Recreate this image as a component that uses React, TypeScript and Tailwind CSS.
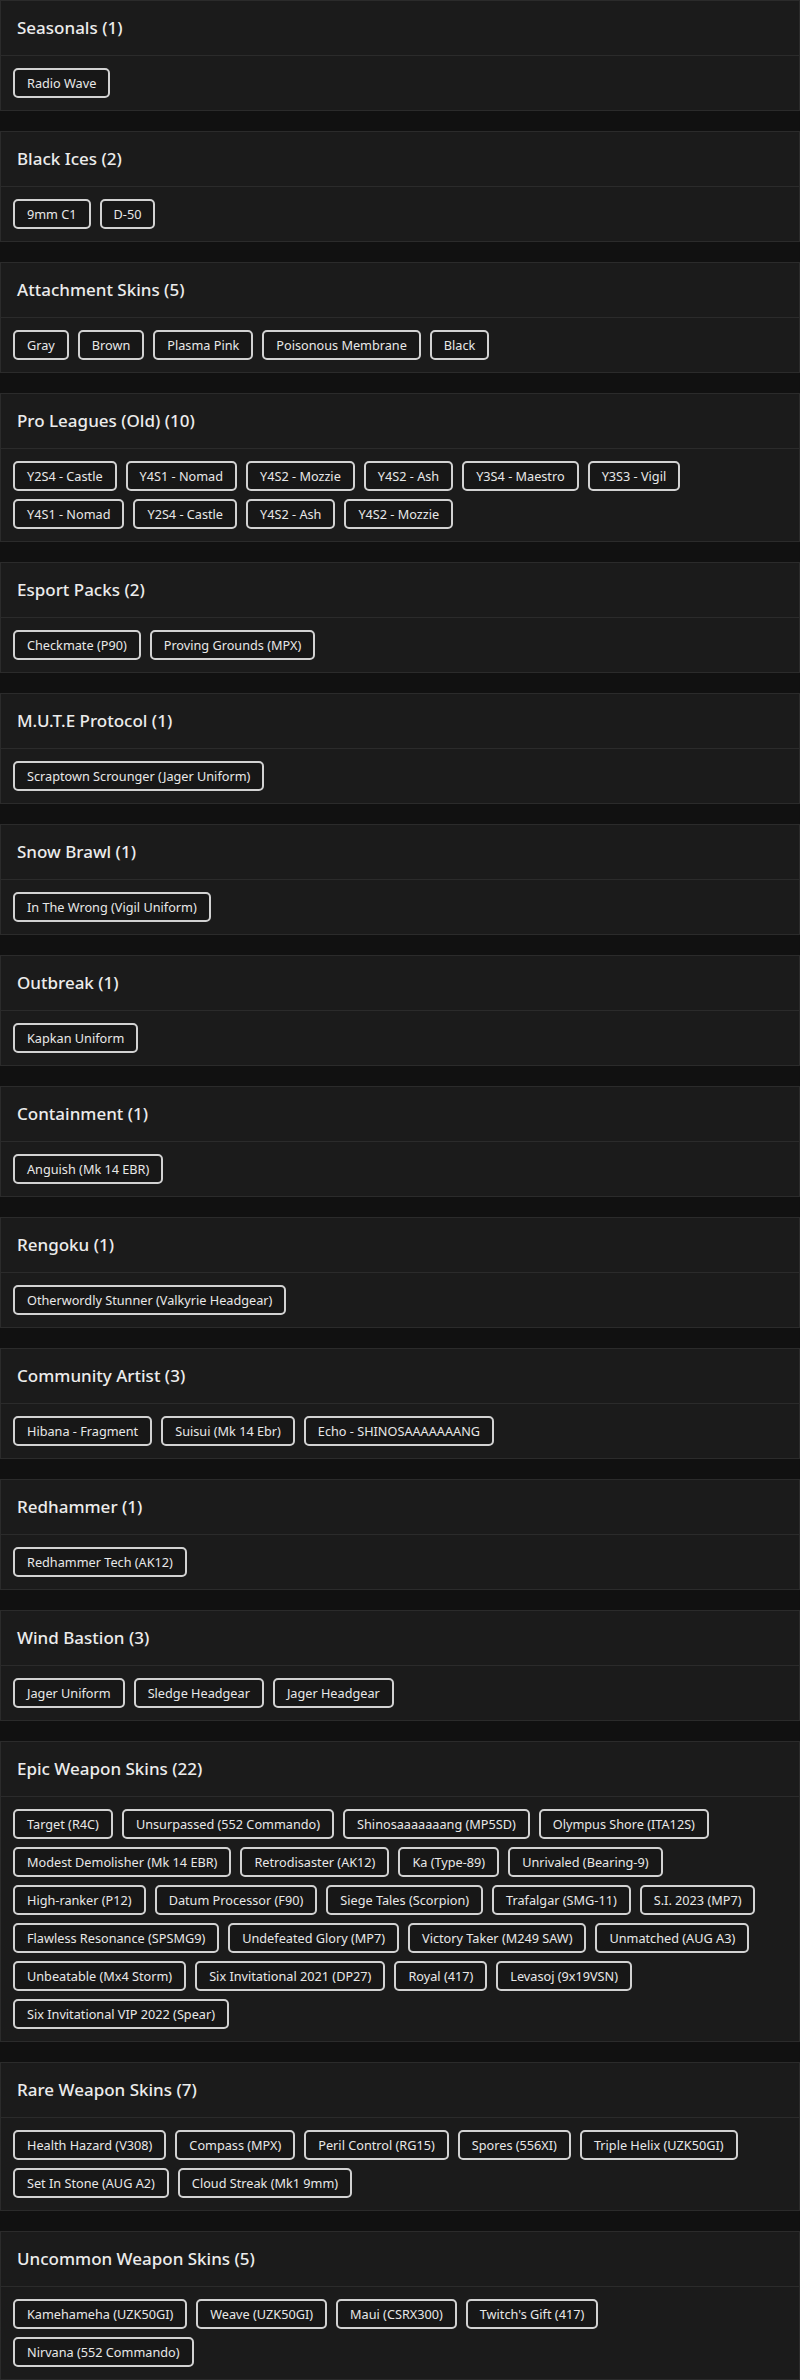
import React from "react";

const groups: { title: string; rows: string[][] }[] = [
  { title: "Seasonals", rows: [["Radio Wave"]] },
  { title: "Black Ices", rows: [["9mm C1", "D-50"]] },
  { title: "Attachment Skins", rows: [["Gray", "Brown", "Plasma Pink", "Poisonous Membrane", "Black"]] },
  {
    title: "Pro Leagues (Old)",
    rows: [
      ["Y2S4 - Castle", "Y4S1 - Nomad", "Y4S2 - Mozzie", "Y4S2 - Ash", "Y3S4 - Maestro", "Y3S3 - Vigil"],
      ["Y4S1 - Nomad", "Y2S4 - Castle", "Y4S2 - Ash", "Y4S2 - Mozzie"],
    ],
  },
  { title: "Esport Packs", rows: [["Checkmate (P90)", "Proving Grounds (MPX)"]] },
  { title: "M.U.T.E Protocol", rows: [["Scraptown Scrounger (Jager Uniform)"]] },
  { title: "Snow Brawl", rows: [["In The Wrong (Vigil Uniform)"]] },
  { title: "Outbreak", rows: [["Kapkan Uniform"]] },
  { title: "Containment", rows: [["Anguish (Mk 14 EBR)"]] },
  { title: "Rengoku", rows: [["Otherwordly Stunner (Valkyrie Headgear)"]] },
  { title: "Community Artist", rows: [["Hibana - Fragment", "Suisui (Mk 14 Ebr)", "Echo - SHINOSAAAAAAANG"]] },
  { title: "Redhammer", rows: [["Redhammer Tech (AK12)"]] },
  { title: "Wind Bastion", rows: [["Jager Uniform", "Sledge Headgear", "Jager Headgear"]] },
  {
    title: "Epic Weapon Skins",
    rows: [
      ["Target (R4C)", "Unsurpassed (552 Commando)", "Shinosaaaaaaang (MP5SD)", "Olympus Shore (ITA12S)"],
      ["Modest Demolisher (Mk 14 EBR)", "Retrodisaster (AK12)", "Ka (Type-89)", "Unrivaled (Bearing-9)"],
      ["High-ranker (P12)", "Datum Processor (F90)", "Siege Tales (Scorpion)", "Trafalgar (SMG-11)", "S.I. 2023 (MP7)"],
      ["Flawless Resonance (SPSMG9)", "Undefeated Glory (MP7)", "Victory Taker (M249 SAW)", "Unmatched (AUG A3)"],
      ["Unbeatable (Mx4 Storm)", "Six Invitational 2021 (DP27)", "Royal (417)", "Levasoj (9x19VSN)"],
      ["Six Invitational VIP 2022 (Spear)"],
    ],
  },
  {
    title: "Rare Weapon Skins",
    rows: [
      ["Health Hazard (V308)", "Compass (MPX)", "Peril Control (RG15)", "Spores (556XI)", "Triple Helix (UZK50GI)"],
      ["Set In Stone (AUG A2)", "Cloud Streak (Mk1 9mm)"],
    ],
  },
  {
    title: "Uncommon Weapon Skins",
    rows: [
      ["Kamehameha (UZK50GI)", "Weave (UZK50GI)", "Maui (CSRX300)", "Twitch's Gift (417)"],
      ["Nirvana (552 Commando)"],
    ],
  },
];

export default function App() {
  return (
    <div className="min-h-[2380px] w-[800px] bg-[#111111] font-['Noto_Sans',sans-serif] text-[#e6e6e6]">
      <div className="flex flex-col gap-5">
        {groups.map((g, i) => {
          const count = g.rows.reduce((a, r) => a + r.length, 0);
          return (
            <section key={i} className="border border-[#2b2b2b] bg-[#1b1b1b]">
              <div className="flex h-[55px] items-center border-b border-[#2b2b2b] px-4">
                <h2 className="text-[17px] font-medium leading-6 text-[#ececec]">
                  {g.title} ({count})
                </h2>
              </div>
              <div className="flex flex-col gap-2 p-3">
                {g.rows.map((row, r) => (
                  <div key={r} className="flex gap-x-[9px]">
                    {row.map((it, j) => (
                      <span
                        key={j}
                        className="flex h-[30px] shrink-0 items-center whitespace-nowrap rounded-[5px] border-2 border-[#d2d2d2] bg-[#171717] px-3 text-[12.7px] leading-none text-[#e8e8e8]"
                      >
                        {it}
                      </span>
                    ))}
                  </div>
                ))}
              </div>
            </section>
          );
        })}
      </div>
    </div>
  );
}
